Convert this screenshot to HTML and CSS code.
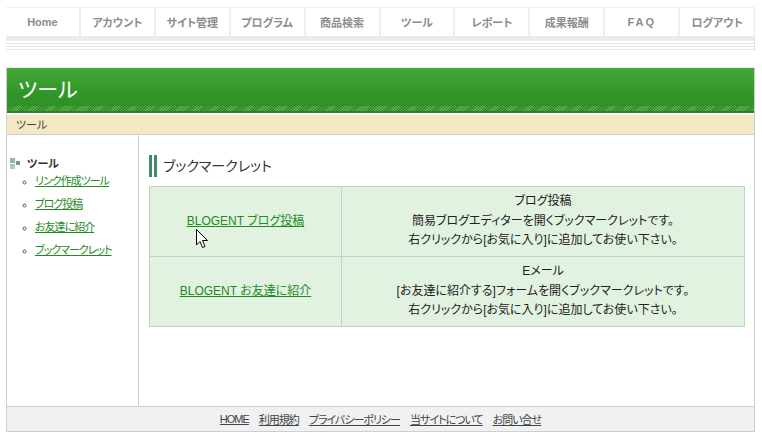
FILE: index.html
```html
<!DOCTYPE html>
<html lang="ja">
<head>
  <meta charset="UTF-8">
  <title>ツール</title>
  <link rel="stylesheet" href="styles.css">
</head>
<body>
  <div class="page">
    <ul class="gnav">
      <li><a href="#">Home</a></li>
      <li><a href="#">アカウント</a></li>
      <li><a href="#">サイト管理</a></li>
      <li><a href="#">プログラム</a></li>
      <li><a href="#">商品検索</a></li>
      <li><a href="#">ツール</a></li>
      <li><a href="#">レポート</a></li>
      <li><a href="#">成果報酬</a></li>
      <li><a href="#" class="latin">FAQ</a></li>
      <li><a href="#">ログアウト</a></li>
    </ul>
    <div class="gnav-sub"></div>

    <div class="wrap">
      <div class="title"><h1>ツール</h1></div>
      <div class="crumb">ツール</div>

      <div class="main">
        <div class="side">
          <div class="side-head">
            <svg class="side-icon" width="12" height="11" viewBox="0 0 12 11">
              <rect x="0" y="0" width="5" height="5" fill="#8fb8a0"/>
              <rect x="6" y="3" width="4" height="4" fill="#6f9f82"/>
              <rect x="0" y="6" width="5" height="5" fill="#a9cbb6"/>
            </svg>
            ツール
          </div>
          <ul class="side-list">
            <li><a href="#">リンク作成ツール</a></li>
            <li><a href="#">ブログ投稿</a></li>
            <li><a href="#">お友達に紹介</a></li>
            <li><a href="#">ブックマークレット</a></li>
          </ul>
        </div>

        <div class="content">
          <h2 class="heading">ブックマークレット</h2>
          <table class="bm">
            <tr>
              <td class="bm-name">
                <a href="#">BLOGENT ブログ投稿</a>
                <svg class="cursor" width="13" height="20" viewBox="0 0 13 20">
                  <path d="M0.5 0.5 L0.5 16 L4 12.5 L6.5 18.5 L9 17.5 L6.5 11.5 L11.5 11.5 Z" fill="#fff" stroke="#000" stroke-width="1"/>
                </svg>
              </td>
              <td class="bm-desc">ブログ投稿<br>簡易ブログエディターを開くブックマークレットです。<br>右クリックから[お気に入り]に追加してお使い下さい。</td>
            </tr>
            <tr>
              <td class="bm-name"><a href="#">BLOGENT お友達に紹介</a></td>
              <td class="bm-desc">Eメール<br>[お友達に紹介する]フォームを開くブックマークレットです。<br>右クリックから[お気に入り]に追加してお使い下さい。</td>
            </tr>
          </table>
        </div>
      </div>

      <div class="footer">
        <a href="#">HOME</a>
        <a href="#">利用規約</a>
        <a href="#">プライバシーポリシー</a>
        <a href="#">当サイトについて</a>
        <a href="#">お問い合せ</a>
      </div>
    </div>
  </div>
</body>
</html>
```

FILE: styles.css
```css
body { margin: 0; background: #fff; font-family: "Liberation Sans", "Noto Sans CJK JP", sans-serif; font-feature-settings: "palt"; color: #222; }
a { color: #1f8a1f; }
.page { padding: 7px 0 0 6px; width: 749px; }

.gnav { list-style: none; margin: 0; padding: 0; display: flex; border-top: 1px solid #f0f0f0; }
.gnav li { width: 75px; height: 28px; display: flex; align-items: center; justify-content: center; background: #fff; border-right: 2px solid #efefef; box-sizing: border-box; }
.gnav li:last-child { border-right: 1px solid #eaeaea; }
.gnav a { color: #8c8c8c; font-size: 11px; font-weight: bold; text-decoration: none; }
.gnav a.latin { letter-spacing: 2px; }
.gnav-sub { height: 15px; border-right: 1px solid #e2e2e2; background: linear-gradient(#ebebeb 0, #ebebeb 5px, #fff 5px, #fff 7px, #e6e8e0 7px, #e6e8e0 8px, #fff 8px, #fff 10px, #e6e8e0 10px, #e6e8e0 11px, #fff 11px, #fff 13px, #e4e6dc 13px, #e4e6dc 14px, #fff 14px); }

.wrap { margin-top: 16px; border-left: 1px solid #cfcfcf; border-right: 1px solid #cfcfcf; border-top: 1px solid #eeeeee; }
.title { height: 43px; background: linear-gradient(#44a736, #32952a 60%, #2d8f24); position: relative; }
.title::after { content: ""; position: absolute; left: 0; right: 0; bottom: 0; height: 5px; background: repeating-linear-gradient(135deg, #2d8a23 0, #2d8a23 1px, #5fae52 1px, #5fae52 2px); }
.title h1 { margin: 0; padding: 9px 0 0 11px; color: #fff; font-size: 21px; font-weight: normal; line-height: 26px; }
.crumb { border-top: 2px solid #2f7f2a; box-shadow: inset 0 1px 0 #fff, inset 0 2px 0 #fff; padding: 3px 0 0 9px; height: 18px; background: #f3e8c1; font-size: 11px; color: #444; border-bottom: 1px solid #cfcfcf; }

.main { display: flex; height: 271px; }
.side { width: 132px; border-right: 1px solid #cfcfcf; padding-top: 20px; }
.side-head { display: flex; align-items: center; gap: 5px; padding-left: 3px; font-size: 11px; font-weight: bold; color: #333; }
.side-list { margin: 1px 0 0; padding: 0 0 0 28px; font-size: 11px; list-style: circle; }
.side-list li { height: 23px; }
.side-list a { letter-spacing: -1px; }
.side-list li::marker { font-size: 9px; color: #555; }

.content { flex: 1; padding: 20px 9px 0 10px; }
.heading { margin: 0 0 9px; height: 22px; background: linear-gradient(to right, #3f8a63 0, #3f8a63 3px, transparent 3px, transparent 5px, #3f8a63 5px, #3f8a63 8px, transparent 8px); padding-left: 14px; font-size: 14px; font-weight: normal; color: #333; line-height: 22px; }
.bm { width: 596px; border-collapse: collapse; background: #e2f2e1; font-size: 12px; }
.bm td { border: 1px solid #c7cfc6; height: 69px; text-align: center; padding: 0; line-height: 19.5px; }
.bm-name { width: 191px; position: relative; }
.bm-name a { color: #1f8a1f; }
.bm-desc { color: #222; }
.cursor { position: absolute; left: 46px; top: 42px; }

.footer { height: 24px; background: #f0f1f2; border-top: 1px solid #cfcfcf; border-bottom: 1px solid #cfcfcf; display: flex; justify-content: center; align-items: center; gap: 10px; font-size: 11px; letter-spacing: -1px; }
.footer a { color: #444; }
```
